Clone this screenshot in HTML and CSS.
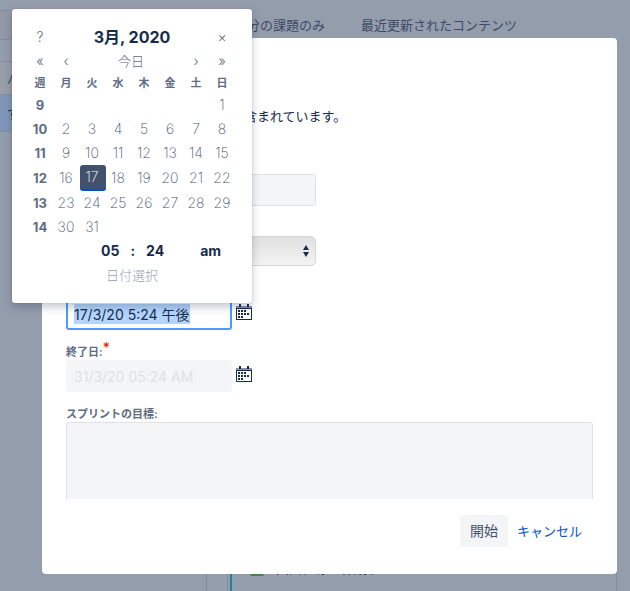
FILE: index.html
```html
<!DOCTYPE html>
<html lang="ja">
<head>
    <meta charset="UTF-8">
    <meta name="viewport" content="width=device-width, initial-scale=1.0">
    <title>スプリントを開始</title>
    <link rel="stylesheet" href="styles.css">
</head>
<body>
  <div class="board">
    <div class="sidebar">
      <div class="row top"></div>
      <div class="row band"></div>
      <div class="row space"></div>
      <div class="row version">バージョン</div>
      <div class="row selected">すべて</div>
    </div>
    <div class="backlog">
      <div class="filters">
        <span>自分の課題のみ</span>
        <span>最近更新されたコンテンツ</span>
      </div>
      <div class="column">
        <div class="issues">
          <div class="issue">
            <span class="story"></span>
            <span>画面仕様を作成する</span>
          </div>
        </div>
      </div>
    </div>
  </div>

  <div class="dialog" role="dialog" aria-labelledby="dialog-title">
    <form class="dialog-body">
      <h2 id="dialog-title">スプリントを開始</h2>
      <p class="intro">1 件の課題がこのスプリントに含まれています。</p>
      <div class="field">
        <label for="name">スプリント名:</label>
        <input type="text" id="name" class="wide">
      </div>
      <div class="field">
        <label for="duration">期間:</label>
        <div class="select-wrap">
          <select id="duration">
            <option>カスタム</option>
          </select>
          <svg class="arrows" width="6" height="12" viewBox="0 0 6 12">
            <path d="M3 0L6 5H0zM3 12L0 7H6z" fill="#172b4d"/>
          </svg>
        </div>
      </div>
      <div class="field">
        <label for="start">開始日:</label>
        <div class="date">
          <input type="text" id="start" value="17/3/20 5:24 午後" autofocus>
          <button type="button" class="cal-btn" aria-label="開始日を選択">
            <svg width="16" height="16" viewBox="0 0 16 16" shape-rendering="crispEdges">
              <path d="M0 2h16v2H0z" fill="#8993a4"/>
              <path d="M3 0h2v3H3zM11 0h2v3h-2zM0 4h16v12H0zM1 5v10h14V5z" fill="#172b4d" fill-rule="evenodd"/>
              <path d="M2 6h2v2H2zM5 6h2v2H5zM8 6h2v2H8zM2 9h2v2H2zM5 9h2v2H5zM8 9h2v2H8zM11 9h2v2h-2zM2 12h2v2H2zM5 12h2v2H5z" fill="#172b4d"/>
            </svg>
          </button>
        </div>
      </div>
      <div class="field">
        <label for="end">終了日:<span class="required">*</span></label>
        <div class="date">
          <input type="text" id="end" value="31/3/20 05:24 AM" disabled>
          <button type="button" class="cal-btn" aria-label="終了日を選択">
            <svg width="16" height="16" viewBox="0 0 16 16" shape-rendering="crispEdges">
              <path d="M0 2h16v2H0z" fill="#8993a4"/>
              <path d="M3 0h2v3H3zM11 0h2v3h-2zM0 4h16v12H0zM1 5v10h14V5z" fill="#172b4d" fill-rule="evenodd"/>
              <path d="M2 6h2v2H2zM5 6h2v2H5zM8 6h2v2H8zM2 9h2v2H2zM5 9h2v2H5zM8 9h2v2H8zM11 9h2v2h-2zM2 12h2v2H2zM5 12h2v2H5z" fill="#172b4d"/>
            </svg>
          </button>
        </div>
      </div>
      <div class="field goal">
        <label for="goal">スプリントの目標:</label>
        <textarea id="goal"></textarea>
      </div>
    </form>
    <div class="dialog-footer">
      <button type="button" class="submit">開始</button>
      <a href="#">キャンセル</a>
    </div>
  </div>

  <div class="picker">
    <table>
      <thead>
        <tr class="title">
          <td><button type="button">?</button></td>
          <th colspan="6">3月, 2020</th>
          <td><button type="button">×</button></td>
        </tr>
        <tr class="nav">
          <td><button type="button">«</button></td>
          <td><button type="button">‹</button></td>
          <td colspan="4"><button type="button" class="today">今日</button></td>
          <td><button type="button">›</button></td>
          <td><button type="button">»</button></td>
        </tr>
        <tr class="names">
          <th>週</th><th>月</th><th>火</th><th>水</th><th>木</th><th>金</th><th>土</th><th>日</th>
        </tr>
      </thead>
      <tbody>
        <tr><th>9</th><td></td><td></td><td></td><td></td><td></td><td></td><td>1</td></tr>
        <tr><th>10</th><td>2</td><td>3</td><td>4</td><td>5</td><td>6</td><td>7</td><td>8</td></tr>
        <tr><th>11</th><td>9</td><td>10</td><td>11</td><td>12</td><td>13</td><td>14</td><td>15</td></tr>
        <tr class="current"><th>12</th><td>16</td><td class="picked">17</td><td>18</td><td>19</td><td>20</td><td>21</td><td>22</td></tr>
        <tr><th>13</th><td>23</td><td>24</td><td>25</td><td>26</td><td>27</td><td>28</td><td>29</td></tr>
        <tr><th>14</th><td>30</td><td>31</td><td></td><td></td><td></td><td></td><td></td></tr>
      </tbody>
    </table>
    <div class="time">
      <span class="hour">05</span>
      <span>:</span>
      <span class="minute">24</span>
      <span class="ampm">am</span>
    </div>
    <div class="hint">日付選択</div>
  </div>

<script>
  document.getElementById('start').focus();
  document.getElementById('start').select();
</script>
</body>
</html>
```

FILE: styles.css
```css
*{
  box-sizing: border-box;
}

body{
  margin: 0;
  height: 100vh;
  overflow: hidden;
  font-family: Inter, "Noto Sans CJK JP", sans-serif;
  font-size: 13px;
  line-height: 20px;
  color: #172b4d;
}

button, input, select, textarea{
  font: inherit;
  color: inherit;
}

button{
  border: 0;
  padding: 0;
  background: none;
}

/* dimmed board behind the dialog */
.board{
  display: flex;
  height: 100%;
  background-color: #949dac;
  color: #3b4a67;
}

.sidebar{
  width: 206px;
}

.row{
  display: flex;
  align-items: center;
  padding-left: 7px;
  border-bottom: 1px solid #858d9d;
}

.top{
  height: 11px;
}

.band{
  height: 29px;
  background-color: #9498a6;
}

.space{
  height: 22px;
}

.version{
  height: 33px;
  background-color: #999ea8;
}

.selected{
  height: 37px;
  background-color: #8096b9;
  color: #172b4d;
}

.backlog{
  flex: 1;
  display: flex;
  flex-direction: column;
  padding: 15px 13px 0 0;
}

.filters{
  display: flex;
  gap: 36px;
  padding: 0 0 10px 28px;
}

.column{
  flex: 1;
  display: flex;
  padding-left: 20px;
  border-left: 1px solid #838c9c;
}

.issues{
  flex: 1;
  display: flex;
  flex-direction: column;
  justify-content: flex-end;
  border: 1px solid #838c9c;
  border-width: 0 1px;
  padding-left: 2px;
}

.issue{
  display: flex;
  gap: 12px;
  height: 60px;
  padding: 27px 0 0 18px;
  border-left: 2px solid #1c8494;
  color: #172b4d;
}

.story{
  width: 14px;
  height: 14px;
  margin-top: 4px;
  border-radius: 2px;
  background-color: #3f8547;
}

.dialog{
  position: absolute;
  top: 38px;
  right: 13px;
  bottom: 17px;
  left: 42px;
  display: flex;
  flex-direction: column;
  background-color: white;
  border-radius: 4px;
}

.dialog-body{
  flex: 1;
  display: flex;
  flex-direction: column;
  gap: 14px;
  min-height: 0;
  overflow: hidden;
  padding: 22px 24px 0;
}

h2{
  margin: 0;
  font-size: 20px;
  line-height: 32px;
  font-weight: 500;
}

.intro{
  margin: 0 0 18px;
}

.field{
  min-height: 48px;
}

.field label{
  display: block;
  font-size: 11px;
  line-height: 16px;
  font-weight: 600;
  color: #5e6c84;
}

.required{
  color: #de350b;
  font-size: 14px;
  line-height: 8px;
  vertical-align: top;
}

.field input{
  display: block;
  width: 166px;
  height: 32px;
  padding: 0 6px;
  border: 2px solid #f4f5f7;
  border-radius: 3px;
  background-color: #f4f5f7;
  font-size: 14px;
}

.field .wide{
  width: 250px;
  border: 1px solid #dfe1e6;
}

.field input:focus{
  outline: none;
  border-color: #4c9aff;
  background-color: white;
}

.field input:disabled{
  color: #dfe1e6;
}

::selection{
  background-color: #b3d4fc;
  color: #172b4d;
}

.select-wrap{
  position: relative;
  width: 250px;
}

select{
  display: block;
  appearance: none;
  width: 100%;
  height: 30px;
  padding: 0 8px;
  border: 1px solid #d5d6da;
  border-radius: 5px;
  background-image: linear-gradient(#e0e0e1, #f3f3f4);
}

.arrows{
  position: absolute;
  top: 9px;
  right: 7px;
}

.date{
  display: flex;
  align-items: flex-start;
  gap: 4px;
}

.cal-btn{
  padding-top: 6px;
}

.cal-btn svg{
  display: block;
}

.goal{
  flex: none;
}

textarea{
  display: block;
  width: 100%;
  height: 120px;
  border: 1px solid #dfe1e6;
  border-radius: 3px;
  background-color: #f4f5f7;
  resize: none;
}

.dialog-footer{
  display: flex;
  justify-content: flex-end;
  align-items: center;
  gap: 9px;
  padding: 16px 35px 27px;
}

.submit{
  height: 32px;
  padding: 0 10px;
  border-radius: 3px;
  background-color: #f4f5f7;
  color: #42526e;
  font-size: 14px;
}

.dialog-footer a{
  color: #0052cc;
  text-decoration: none;
}

/* date picker popup */
.picker{
  position: absolute;
  top: 9px;
  left: 12px;
  width: 240px;
  padding: 16px;
  border-radius: 3px;
  background-color: white;
  box-shadow: 0 4px 8px rgba(9, 30, 66, 0.25), 0 0 1px rgba(9, 30, 66, 0.3);
}

.picker table{
  width: 100%;
  table-layout: fixed;
  border-spacing: 0;
  text-align: center;
  color: #5e6c84;
}

.picker th, .picker td{
  height: 24px;
  padding: 0 2px 0 0;
  font-size: 13px;
  line-height: 20px;
}

.picker td{
  font-size: 14px;
  font-weight: 200;
  color: #42526e;
}

.picker .title th{
  padding: 0;
  font-size: 16px;
  color: #172b4d;
}

.picker .names th{
  height: 20px;
  font-size: 11px;
}

.picker td button{
  display: block;
  width: 100%;
  font-size: 14px;
  font-weight: 300;
  color: #5e6c84;
}

.picker td .today{
  font-size: 13px;
  font-weight: 200;
}

.picker .current th, .picker .current td{
  height: 26px;
}

.picker .current .picked{
  border-radius: 3px;
  background-color: #42526e;
  border-bottom: 2px solid #0052cc;
  color: white;
}

.time{
  display: flex;
  align-items: center;
  height: 24px;
  padding-left: 73px;
  gap: 11px;
  font-size: 14px;
  font-weight: 700;
}

.ampm{
  margin-left: 25px;
}

.hint{
  height: 24px;
  line-height: 24px;
  text-align: center;
  font-weight: 200;
  color: #97a0af;
}
```
